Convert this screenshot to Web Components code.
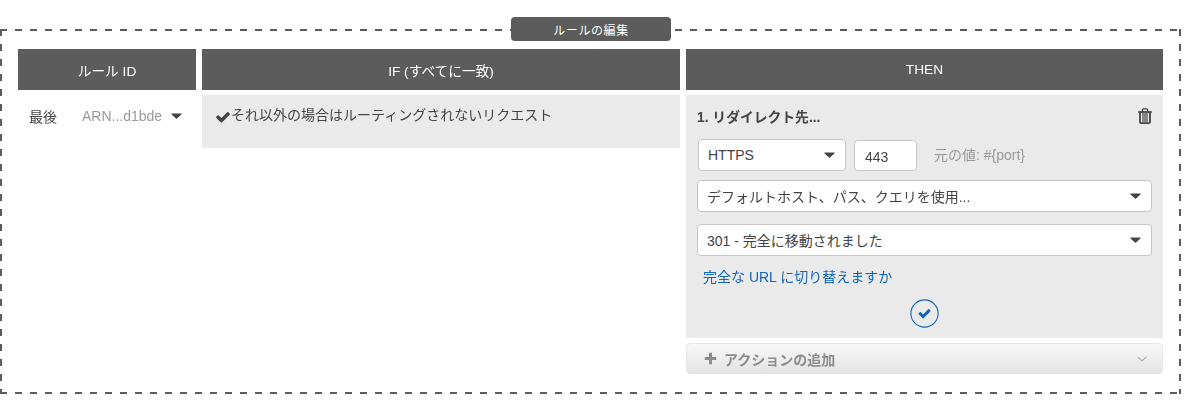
<!DOCTYPE html>
<html lang="ja">
<head>
<meta charset="utf-8">
<title>ルールの編集</title>
<style>
html, body { margin: 0; background: #fff; }
body { font-family: "Liberation Sans", "Noto Sans CJK JP", sans-serif; font-size: 14px; color: #444; }
</style>
</head>
<body>
<rule-frame heading="ルールの編集">
  <rule-grid>
    <col-head>ルール ID</col-head>
    <col-head>IF (すべてに一致)</col-head>
    <col-head>THEN</col-head>

    <rule-id-cell order="最後" arn="ARN...d1bde"></rule-id-cell>

    <if-cell>それ以外の場合はルーティングされないリクエスト</if-cell>

    <then-cell>
      <action-panel title-text="1. リダイレクト先...">
        <port-row proto="HTTPS" port="443" hint="元の値: #{port}"></port-row>
        <drop-select>デフォルトホスト、パス、クエリを使用...</drop-select>
        <drop-select>301 - 完全に移動されました</drop-select>
      </action-panel>
      <add-action>アクションの追加</add-action>
    </then-cell>
  </rule-grid>
</rule-frame>

<script>
const CHECK_PATH = 'M1671 566q0 40-28 68l-724 724-136 136q-28 28-68 28t-68-28l-136-136-362-362q-28-28-28-68t28-68l136-136q28-28 68-28t68 28l294 295 656-657q28-28 68-28t68 28l136 136q28 28 28 68z'
const CARET = '<svg width="11" height="6" viewBox="0 0 11 6"><path d="M1 0.5h9c.6 0 .8.5.4.9L6 5.6c-.3.3-.7.3-1 0L.6 1.4C.2 1 .4.5 1 .5z" fill="currentColor"/></svg>'

/**
 * Defines a simple element from its shadow markup.
 *
 * @param {string} name - The tag name.
 * @param {Function} render - Returns the markup, gets the element.
 */
function defineElement(name, render) {
  customElements.define(name, class extends HTMLElement {
    constructor() {
      super()
      this.attachShadow({ mode: 'open' }).innerHTML = render(this)
    }
  })
}

// Dashed frame. The dashes are 7px on a 15px period, which a CSS border can't do.
defineElement('rule-frame', (el) => `
<style>
:host {
  display: block; position: relative; box-sizing: border-box;
  width: 1181px; height: 365px; margin-top: 29px; padding: 20px 18px;
  will-change: opacity;
  --d: linear-gradient(90deg, #5c5c5c 7px, transparent 7px);
  --v: linear-gradient(180deg, #5c5c5c 7px, transparent 7px);
  background-image: var(--d), var(--d), var(--v), var(--v);
  background-size: 15px 2px, 15px 2px, 2px 15px, 2px 15px;
  background-repeat: repeat-x, repeat-x, repeat-y, repeat-y;
  background-position: 0 0, 0 100%, 0 0, 100% 0;
}
.legend {
  position: absolute; left: 511px; top: -12px; width: 160px; height: 24px;
  background: #5c5c5c; color: #fff; border-radius: 4px;
  display: flex; align-items: center; justify-content: center;
  font-size: 12px; letter-spacing: .6px;
}
</style>
<div class="legend">${el.getAttribute('heading')}</div>
<slot></slot>`)

defineElement('rule-grid', () => `
<style>
:host {
  display: grid; grid-template-columns: 178px 478px 477px;
  grid-template-rows: 41px auto; column-gap: 6px; row-gap: 5px;
  align-items: start;
}
</style>
<slot></slot>`)

defineElement('col-head', () => `
<style>
:host {
  display: flex; align-items: center; justify-content: center; height: 41px;
  background: #5c5c5c; color: #fff; font-size: 13.7px;
}
</style>
<slot></slot>`)

defineElement('rule-id-cell', (el) => `
<style>
:host { display: flex; align-items: center; padding: 11px 14px 0 11px; color: #444; white-space: nowrap; }
.arn { color: #999; margin-left: 25px; font-size: 14px; }
.caret { color: #444; margin-left: 9px; display: flex; }
</style>
<span>${el.getAttribute('order')}</span>
<span class="arn">${el.getAttribute('arn')}</span>
<span class="caret">${CARET}</span>`)

defineElement('if-cell', () => `
<style>
:host {
  display: flex; align-items: flex-start; box-sizing: border-box; height: 53px;
  background: #eaeaea; padding: 12px 13px; color: #444; line-height: 17px;
}
svg { width: 16px; height: 16px; margin-top: 2px; fill: #444; flex: none; }
</style>
<svg viewBox="0 0 1792 1792"><path d="${CHECK_PATH}"/></svg>
<slot></slot>`)

defineElement('then-cell', () => `
<style>:host { display: flex; flex-direction: column; gap: 5px; }</style>
<slot></slot>`)

defineElement('action-panel', (el) => `
<style>
:host {
  display: block; box-sizing: border-box; height: 243px;
  background: #eaeaea; padding: 12px 11px 0 11px; color: #444;
}
.title { display: flex; justify-content: space-between; align-items: center; height: 18px; font-weight: bold; font-size: 13.8px; margin-bottom: 14px; }
.body { display: flex; flex-direction: column; gap: 12px; }
a { display: block; color: #1166bb; text-decoration: none; font-size: 14px; margin: 12px 0 0 6px; line-height: 18px; }
.ok { display: flex; justify-content: center; margin-top: 13px; }
</style>
<div class="title">
  <span>${el.getAttribute('title-text')}</span>
  <svg width="14" height="16" viewBox="0 0 14 16" fill="none" stroke="#444">
    <path d="M.3 4h13.4" stroke-width="1.8"/>
    <path d="M4.4 3.4V2c0-.7.5-1.2 1.1-1.2h3c.6 0 1.1.5 1.1 1.2v1.4" stroke-width="1.3"/>
    <path d="M2 4v10c0 .9.6 1.1 1.2 1.1h7.6c.6 0 1.2-.2 1.2-1.1V4" stroke-width="1.8"/>
    <path d="M5 5v9M7 5v9M9 5v9" stroke-width="1.2"/>
  </svg>
</div>
<div class="body"><slot></slot></div>
<a href="#">完全な URL に切り替えますか</a>
<div class="ok">
  <svg width="29" height="29" viewBox="0 0 29 29">
    <circle cx="14.5" cy="14.5" r="13.6" fill="none" stroke="#1166bb" stroke-width="1.1"/>
    <svg x="7.5" y="7.5" width="14" height="14" viewBox="0 0 1792 1792"><path d="${CHECK_PATH}" fill="#1166bb"/></svg>
  </svg>
</div>`)

defineElement('drop-select', () => `
<style>
:host {
  display: flex; align-items: center; justify-content: space-between; box-sizing: border-box;
  height: 32px; background: #fff; border: 1px solid #c6c6c6; border-radius: 4px;
  padding: 0 10px 0 9px; color: #444; font-size: 14px;
}
.caret { display: flex; color: #444; }
</style>
<slot></slot><span class="caret">${CARET}</span>`)

defineElement('port-row', (el) => `
<style>
:host { display: flex; align-items: flex-start; height: 32px; margin-bottom: -3px; padding-left: 1px; }
drop-select { width: 148px; }
.port {
  box-sizing: border-box; width: 63px; height: 31px; margin: 1px 0 0 8px; padding: 2px 0 0 10px;
  background: #fff; border: 1px solid #c6c6c6; border-radius: 4px;
  display: flex; align-items: center; font-size: 14px; color: #444;
}
.hint { color: #999; font-size: 14px; margin: 5px 0 0 17px; }
</style>
<drop-select>${el.getAttribute('proto')}</drop-select>
<div class="port">${el.getAttribute('port')}</div>
<div class="hint">${el.getAttribute('hint')}</div>`)

defineElement('add-action', () => `
<style>
:host {
  display: flex; align-items: center; box-sizing: border-box; height: 31px; padding: 0 15px 0 17px;
  background: linear-gradient(#f8f8f8, #e3e3e3); border: 1px solid #e6e6e6; border-radius: 4px;
  color: #8c8c8c; font-weight: bold; font-size: 14px;
}
.plus { margin-right: 7px; flex: none; }
.label { flex: 1; }
</style>
<svg class="plus" width="13" height="13" viewBox="0 0 13 13"><path d="M5 .8h3v4.2h4.2v3H8v4.2H5V8H.8V5H5z" fill="#8c8c8c"/></svg>
<span class="label"><slot></slot></span>
<svg width="10" height="6" viewBox="0 0 10 6" fill="none" stroke="#a8a8a8" stroke-width="1.1"><path d="M.6.8L5 4.8 9.4.8"/></svg>`)
</script>
</body>
</html>
